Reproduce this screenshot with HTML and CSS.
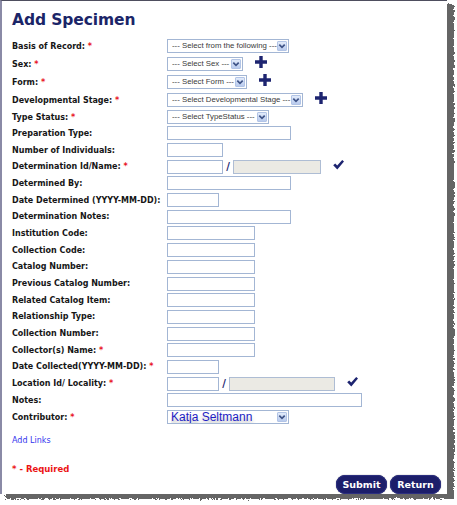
FILE: index.html
```html
<!DOCTYPE html>
<html lang="en">
<head>
<meta charset="utf-8">
<title>Add Specimen</title>
<link rel="stylesheet" href="styles.css">
</head>
<body>
<svg class="defs" width="0" height="0" aria-hidden="true">
  <filter id="rough" x="-5%" y="-5%" width="110%" height="110%">
    <feTurbulence type="fractalNoise" baseFrequency="0.45" numOctaves="2" seed="3" result="n"/>
    <feDisplacementMap in="SourceGraphic" in2="n" scale="5" xChannelSelector="R" yChannelSelector="G"/>
    <feGaussianBlur stdDeviation="0.6"/>
  </filter>
</svg>
<div class="page">
  <div class="shadow"></div>
  <div class="frame">
    <h1 class="title">Add Specimen</h1>
    <form class="form">
      <div class="row row-sel">
        <label class="lbl">Basis of Record: <span class="req">*</span></label>
        <div class="ctl">
          <span class="select w-basis"><select><option>--- Select from the following ---</option></select><span class="arrow"><svg width="8" height="8" viewBox="0 0 8 8"><path d="M1.3 2.6 L4 5.3 L6.7 2.6" fill="none" stroke="#3f5488" stroke-width="1.7"/></svg></span></span>
        </div>
      </div>
      <div class="row row-sel">
        <label class="lbl">Sex: <span class="req">*</span></label>
        <div class="ctl">
          <span class="select w-sex"><select><option>--- Select Sex ---</option></select><span class="arrow"><svg width="8" height="8" viewBox="0 0 8 8"><path d="M1.3 2.6 L4 5.3 L6.7 2.6" fill="none" stroke="#3f5488" stroke-width="1.7"/></svg></span></span>
          <svg class="plus" width="12" height="12" viewBox="0 0 12 12"><path d="M4.3 0h3.4v4.3h4.3v3.4h-4.3v4.3h-3.4v-4.3h-4.3v-3.4h4.3z"/></svg>
        </div>
      </div>
      <div class="row row-sel">
        <label class="lbl">Form: <span class="req">*</span></label>
        <div class="ctl">
          <span class="select w-form"><select><option>--- Select Form ---</option></select><span class="arrow"><svg width="8" height="8" viewBox="0 0 8 8"><path d="M1.3 2.6 L4 5.3 L6.7 2.6" fill="none" stroke="#3f5488" stroke-width="1.7"/></svg></span></span>
          <svg class="plus" width="12" height="12" viewBox="0 0 12 12"><path d="M4.3 0h3.4v4.3h4.3v3.4h-4.3v4.3h-3.4v-4.3h-4.3v-3.4h4.3z"/></svg>
        </div>
      </div>
      <div class="row row-sel">
        <label class="lbl">Developmental Stage: <span class="req">*</span></label>
        <div class="ctl">
          <span class="select w-dev"><select><option>--- Select Developmental Stage ---</option></select><span class="arrow"><svg width="8" height="8" viewBox="0 0 8 8"><path d="M1.3 2.6 L4 5.3 L6.7 2.6" fill="none" stroke="#3f5488" stroke-width="1.7"/></svg></span></span>
          <svg class="plus" width="12" height="12" viewBox="0 0 12 12"><path d="M4.3 0h3.4v4.3h4.3v3.4h-4.3v4.3h-3.4v-4.3h-4.3v-3.4h4.3z"/></svg>
        </div>
      </div>
      <div class="row row-sel row-last">
        <label class="lbl">Type Status: <span class="req">*</span></label>
        <div class="ctl">
          <span class="select w-type"><select><option>--- Select TypeStatus ---</option></select><span class="arrow"><svg width="8" height="8" viewBox="0 0 8 8"><path d="M1.3 2.6 L4 5.3 L6.7 2.6" fill="none" stroke="#3f5488" stroke-width="1.7"/></svg></span></span>
        </div>
      </div>
      <div class="row"><label class="lbl">Preparation Type:</label><div class="ctl"><input class="inp w-l" type="text"></div></div>
      <div class="row"><label class="lbl">Number of Individuals:</label><div class="ctl"><input class="inp w-s" type="text"></div></div>
      <div class="row">
        <label class="lbl">Determination Id/Name: <span class="req">*</span></label>
        <div class="ctl">
          <input class="inp w-s" type="text"><span class="slash">/</span><input class="inp gray w-g1" type="text" disabled>
          <svg class="check" width="11" height="10" viewBox="0 0 11 10"><path d="M0.2 5.2 L2.2 3.4 L4.2 5.6 L9.2 0 L11 1.6 L4.3 9.4 Z"/></svg>
        </div>
      </div>
      <div class="row"><label class="lbl">Determined By:</label><div class="ctl"><input class="inp w-l" type="text"></div></div>
      <div class="row"><label class="lbl">Date Determined (YYYY-MM-DD):</label><div class="ctl"><input class="inp w-d" type="text"></div></div>
      <div class="row"><label class="lbl">Determination Notes:</label><div class="ctl"><input class="inp w-l" type="text"></div></div>
      <div class="row"><label class="lbl">Institution Code:</label><div class="ctl"><input class="inp w-m" type="text"></div></div>
      <div class="row"><label class="lbl">Collection Code:</label><div class="ctl"><input class="inp w-m" type="text"></div></div>
      <div class="row"><label class="lbl">Catalog Number:</label><div class="ctl"><input class="inp w-m" type="text"></div></div>
      <div class="row"><label class="lbl">Previous Catalog Number:</label><div class="ctl"><input class="inp w-m" type="text"></div></div>
      <div class="row"><label class="lbl">Related Catalog Item:</label><div class="ctl"><input class="inp w-m" type="text"></div></div>
      <div class="row"><label class="lbl">Relationship Type:</label><div class="ctl"><input class="inp w-m" type="text"></div></div>
      <div class="row"><label class="lbl">Collection Number:</label><div class="ctl"><input class="inp w-m" type="text"></div></div>
      <div class="row"><label class="lbl">Collector(s) Name: <span class="req">*</span></label><div class="ctl"><input class="inp w-m" type="text"></div></div>
      <div class="row"><label class="lbl">Date Collected(YYYY-MM-DD): <span class="req">*</span></label><div class="ctl"><input class="inp w-d" type="text"></div></div>
      <div class="row">
        <label class="lbl">Location Id/ Locality: <span class="req">*</span></label>
        <div class="ctl">
          <input class="inp w-d" type="text"><span class="slash">/</span><input class="inp gray w-g2" type="text" disabled>
          <svg class="check" width="11" height="10" viewBox="0 0 11 10"><path d="M0.2 5.2 L2.2 3.4 L4.2 5.6 L9.2 0 L11 1.6 L4.3 9.4 Z"/></svg>
        </div>
      </div>
      <div class="row"><label class="lbl">Notes:</label><div class="ctl"><input class="inp w-xl" type="text"></div></div>
      <div class="row">
        <label class="lbl">Contributor: <span class="req">*</span></label>
        <div class="ctl">
          <span class="select w-basis contrib"><select><option>Katja Seltmann</option></select><span class="arrow"><svg width="8" height="8" viewBox="0 0 8 8"><path d="M1.3 2.6 L4 5.3 L6.7 2.6" fill="none" stroke="#3f5488" stroke-width="1.7"/></svg></span></span>
        </div>
      </div>
    </form>
    <a class="links" href="#">Add Links</a>
    <div class="required">* - Required</div>
    <div class="buttons">
      <button class="btn" type="button">Submit</button>
      <button class="btn" type="button">Return</button>
    </div>
  </div>
</div>
</body>
</html>
```
FILE: styles.css
```css
* { box-sizing: border-box; }
html, body { margin: 0; padding: 0; background: #fff; }
body { font-family: "DejaVu Sans", Verdana, sans-serif; color: #111; }
.defs { position: absolute; width: 0; height: 0; }

.page { position: relative; width: 457px; height: 505px; }

.shadow {
  position: absolute;
  left: 5px; top: 4px;
  width: 449px; height: 495px;
  background: #555;
  filter: url(#rough);
  opacity: 0.9;
}

.frame {
  position: relative;
  width: 447px;
  height: 494px;
  background: #fff;
  border-top: 1px solid #4e4e5e;
  border-left: 2px solid #8a8aa6;
  box-shadow: -1px 0 0 #dcdce4;
  padding: 10px 6px 0 10px;
  display: flex;
  flex-direction: column;
}

.title {
  margin: 0;
  font-size: 15.5px;
  line-height: 18px;
  font-weight: bold;
  color: #1b2568;
  letter-spacing: -0.1px;
}

.form { margin-top: 8px; display: flex; flex-direction: column; }

.row { display: flex; align-items: center; height: 16.7px; }
.row-sel { height: 18px; }
.row-last { height: 16px; }

.lbl {
  flex: none;
  width: 155px;
  font-size: 8px;
  font-weight: bold;
  color: #161616;
  white-space: nowrap;
}
.req { color: #e8121e; }

.ctl { display: flex; align-items: center; }

.select {
  position: relative;
  display: block;
  height: 14px;
}
.select select {
  display: block;
  appearance: none;
  -webkit-appearance: none;
  width: 100%;
  height: 14px;
  margin: 0;
  padding: 0 0 0 4px;
  border: 1px solid #a3b6d4;
  border-radius: 0;
  background: #fff;
  font-family: "Liberation Sans", Arial, sans-serif;
  font-size: 7.8px;
  color: #3a3a3a;
  line-height: 12px;
}
.arrow {
  position: absolute;
  right: 2px; top: 2px;
  width: 10px; height: 10px;
  background: linear-gradient(#e2ebfa, #b9cbee);
  border: 1px solid #b2c4e6;
  border-radius: 1px;
  display: flex; align-items: center; justify-content: center;
  pointer-events: none;
}
.contrib select {
  font-size: 12px;
  color: #1d1dc4;
  padding-left: 3px;
  text-shadow: 0 4px 4px rgba(0,0,0,0.3);
  line-height: 12px;
}

.w-basis { width: 122px; }
.w-sex { width: 76px; }
.w-form { width: 80px; }
.w-dev { width: 136px; }
.w-type { width: 102px; }

.plus { margin-left: 12px; fill: #1d2470; position: relative; top: -2px; }

.inp {
  display: block;
  height: 14px;
  margin: 0;
  padding: 0;
  border: 1px solid #a3b6d4;
  border-radius: 0;
  background: #fff;
  font-size: 8px;
}
.inp.gray { background: #ebeae4; border-color: #aebdd4; }
.w-l { width: 124px; }
.w-s { width: 56px; }
.w-d { width: 52px; }
.w-m { width: 88px; }
.w-xl { width: 195px; }
.w-g1 { width: 88px; }
.w-g2 { width: 106px; }

.slash {
  width: 10px;
  text-align: center;
  font-size: 10px;
  font-weight: bold;
  color: #1d2470;
  line-height: 10px;
}

.check { margin-left: 12px; fill: #1d2470; position: relative; top: -2px; }

.links {
  margin-top: 11px;
  align-self: flex-start;
  font-size: 8px;
  line-height: 10px;
  color: #3434ee;
  text-decoration: none;
}
.required {
  margin-top: 18px;
  font-size: 8.5px;
  line-height: 10px;
  font-weight: bold;
  color: #ec1414;
}
.buttons {
  display: flex;
  justify-content: flex-end;
  gap: 3px;
  margin-top: 1px;
}
.btn {
  height: 19px;
  padding: 0;
  border: none;
  border-radius: 9px;
  background: #1c1e6a;
  box-shadow: inset 0 0 0 1px #2c2f80, 0 0 1px #555;
  color: #fff;
  font-family: "DejaVu Sans", Verdana, sans-serif;
  font-size: 9.5px;
  font-weight: bold;
  width: 51px;
}
```
